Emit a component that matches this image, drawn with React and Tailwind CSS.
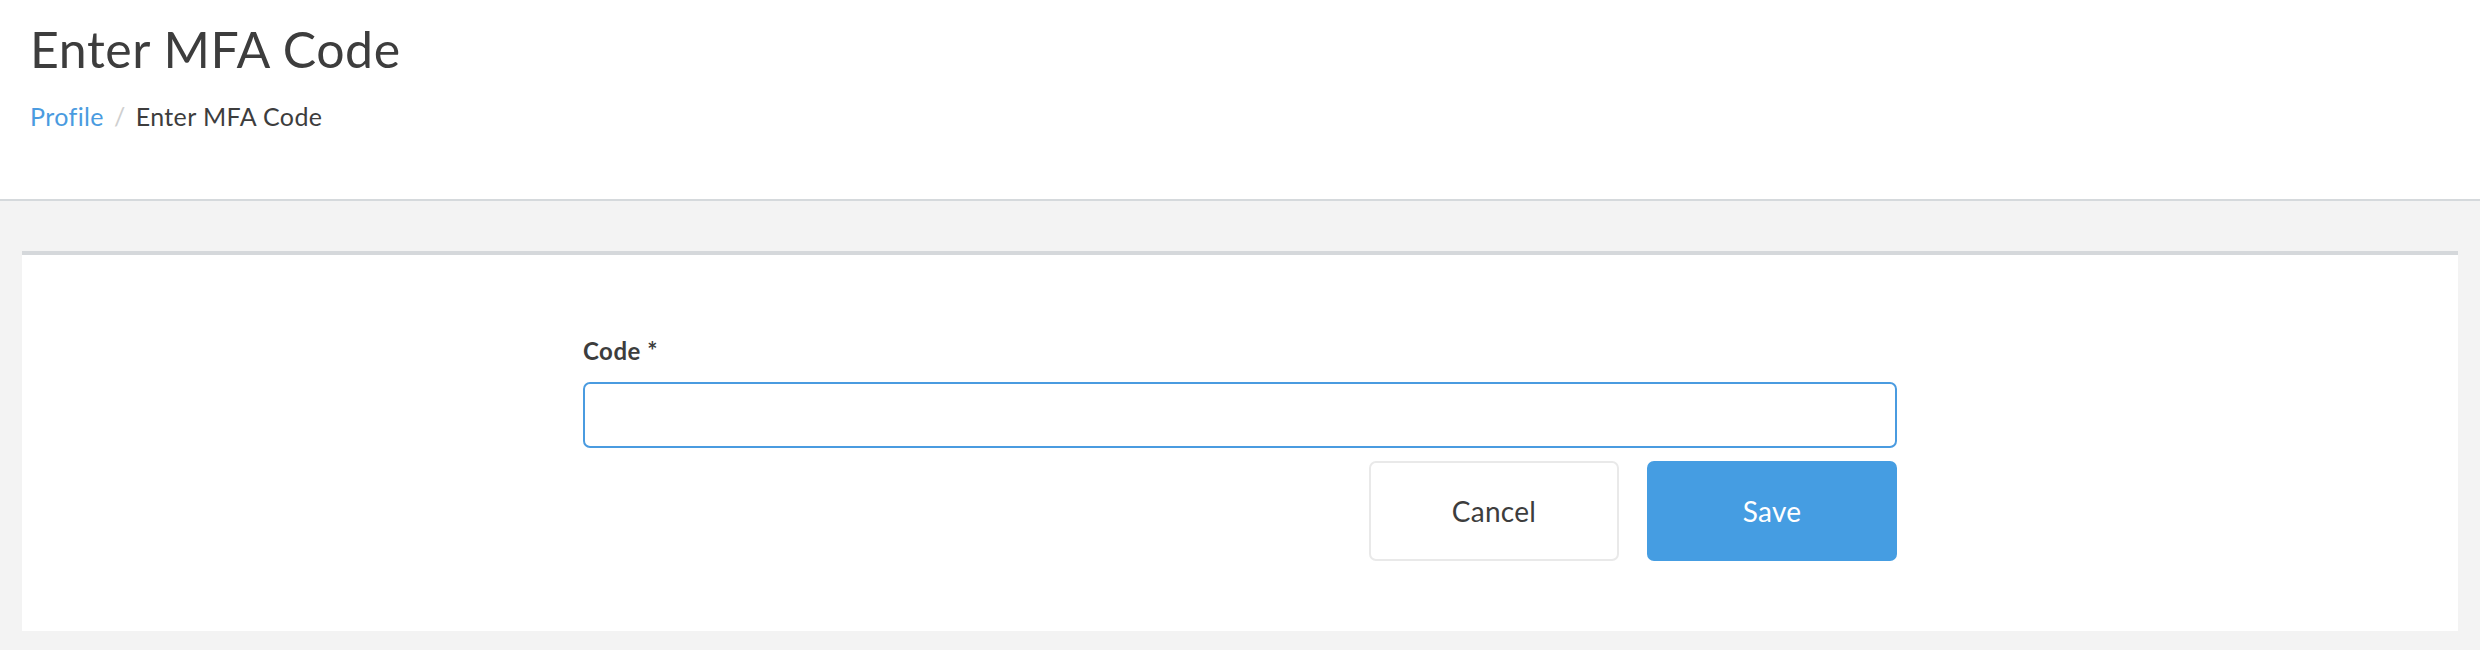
export default function App(){
  return(
    <div className="min-h-[650px] bg-[#f3f3f3] font-['Lato',sans-serif] text-[#3d3d3d]">
      <div className="h-[201px] bg-white border-b-2 border-[#d5d9dc] px-[30px] pt-[19px]">
        <h1 className="text-[50px] leading-[60px] font-normal tracking-[0.6px]">Enter MFA Code</h1>
        <div className="mt-[22px] flex items-center text-[25px] leading-[30px] tracking-[0.4px]">
          <a href="#" className="text-[#4a9be0]">Profile</a>
          <span className="mx-[10px] text-[#cfcfcf]">/</span>
          <span>Enter MFA Code</span>
        </div>
      </div>

      <div className="mx-[22px] mt-[50px] bg-white border-t-4 border-[#d5d8db] pt-[81px] pb-[70px]">
        <form className="w-[1314px] mx-auto" onSubmit={(e)=>e.preventDefault()}>
          <label className="block text-[24px] leading-[30px] font-bold tracking-[0.5px] mb-[16px]">Code *</label>
          <input
            type="text"
            className="block w-full h-[66px] border-2 border-[#4a9be0] rounded-[7px] px-4 text-[24px] outline-none"
          />
          <div className="mt-[13px] flex justify-end gap-[28px]">
            <button type="button" className="w-[250px] h-[100px] border-2 border-[#e9e9e9] rounded-[7px] bg-white text-[28px] tracking-[0.3px] text-[#3d3d3d]">
              Cancel
            </button>
            <button type="submit" className="w-[250px] h-[100px] rounded-[7px] bg-[#459de2] text-[28px] tracking-[0.3px] text-white">
              Save
            </button>
          </div>
        </form>
      </div>
    </div>
  );
}
